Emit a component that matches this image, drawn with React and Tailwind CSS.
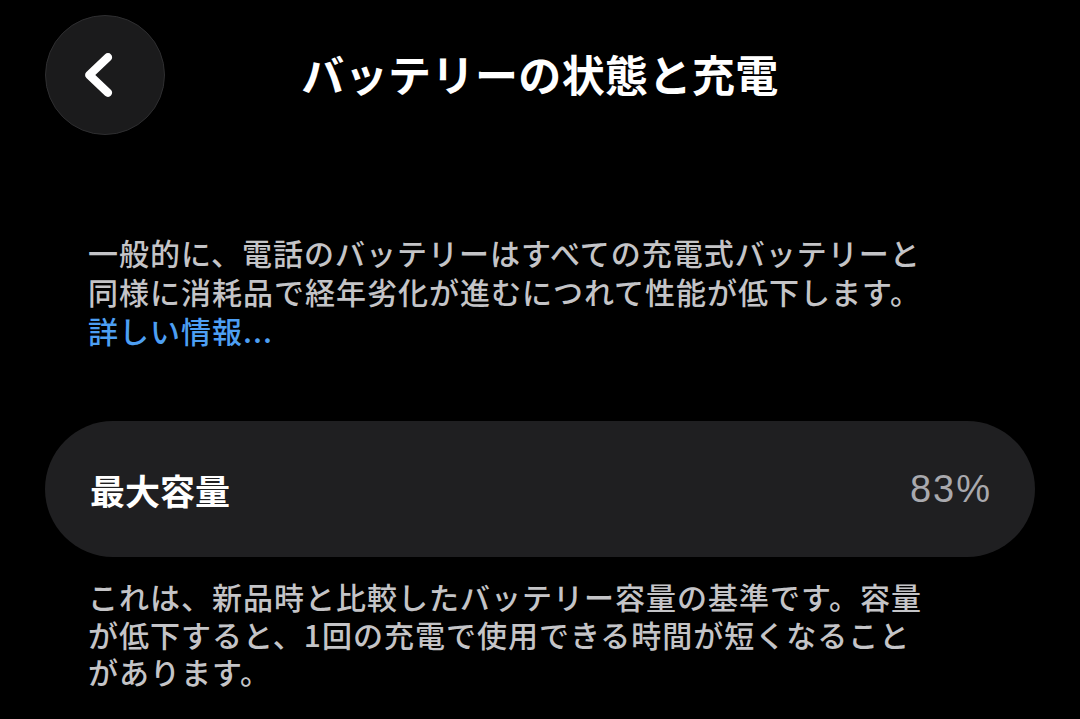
export default function App() {
  const jp = { fontFamily: '"Noto Sans CJK JP", "Noto Sans", sans-serif' };
  return (
    <div className="w-[1080px] h-[719px] bg-black overflow-hidden" style={jp}>
      <div className="grid grid-cols-[1fr_auto_1fr] items-center px-[45px] pt-[15px]">
        <div className="flex">
          <button className="w-[120px] h-[120px] rounded-full bg-[#1b1b1c] border border-[#2e2e30] flex items-center justify-center">
            <svg width="120" height="120" viewBox="0 0 120 120">
              <path d="M63 42 L44 60 L63 78" fill="none" stroke="#ffffff" strokeWidth="8.5" strokeLinecap="round" strokeLinejoin="round" />
            </svg>
          </button>
        </div>
        <h1 className="text-[43px] font-bold text-white leading-[50px] tracking-[0.4px] mb-[5px]">バッテリーの状態と充電</h1>
        <div />
      </div>

      <div className="px-[88px] mt-[98px] text-[30px] leading-[39px] tracking-[1px] text-[#c4c4c7] font-medium">
        <div className="whitespace-nowrap">一般的に、電話のバッテリーはすべての充電式バッテリーと</div>
        <div className="whitespace-nowrap">同様に消耗品で経年劣化が進むにつれて性能が低下します。</div>
        <div className="whitespace-nowrap text-[#4d9ff3]">詳しい情報...</div>
      </div>

      <div className="mx-[45px] mt-[71px] h-[136px] rounded-full bg-[#1f1f21] flex items-center justify-between pl-[45px] pr-[43px]">
        <span className="text-[35px] font-bold text-white leading-none">最大容量</span>
        <span className="text-[38px] tracking-[2px] text-[#a9a9ae] leading-none" style={{ fontFamily: '"Liberation Sans", Arial, sans-serif' }}>83%</span>
      </div>

      <div className="px-[88px] mt-[21px] text-[30px] leading-[37.5px] tracking-[1px] text-[#c4c4c7] font-medium">
        <div className="whitespace-nowrap">これは、新品時と比較したバッテリー容量の基準です。容量</div>
        <div className="whitespace-nowrap">が低下すると、1回の充電で使用できる時間が短くなること</div>
        <div className="whitespace-nowrap">があります。</div>
      </div>
    </div>
  );
}
